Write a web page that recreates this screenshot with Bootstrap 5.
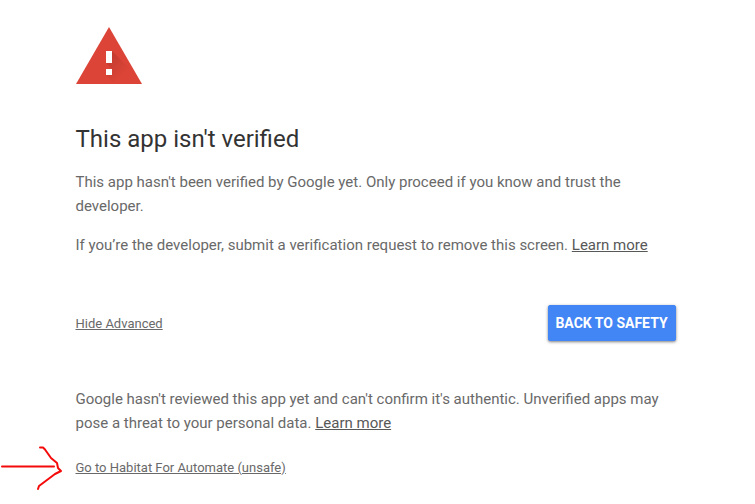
<!DOCTYPE html>
<html lang="en">
<head>
<meta charset="utf-8">
<meta name="viewport" content="width=device-width, initial-scale=1">
<title>This app isn't verified</title>
<link href="https://cdn.jsdelivr.net/npm/bootstrap@5.3.0/dist/css/bootstrap.min.css" rel="stylesheet">
<style>
  body { font-family: Roboto, "Liberation Sans", sans-serif; font-size: 15px; line-height: 24px; color: #696969; padding-right: 4px; }
  .interstitial { max-width: 600px; padding-top: 27px; }
  .warning-icon { width: 66px; height: 57px; margin-bottom: 40px; }
  .interstitial h1 { font-size: 24px; line-height: 30px; color: #333; margin-bottom: 16px; }
  .interstitial p { margin-bottom: 15px; }
  .interstitial a { color: #696969; text-underline-offset: 1px; }
  .interstitial p a { color: #585858; }
  .actions { margin-top: 48px; margin-bottom: 46px; }
  .fine { font-size: 13px; line-height: 20px; }
  .text-toggle { --bs-btn-font-size: 13px; --bs-btn-line-height: 20px; color: #696969; text-underline-offset: 1px; padding: 2px 0 0; }
  .btn-safety { --bs-btn-color: #fff; --bs-btn-bg: #4285f4; --bs-btn-border-color: #4285f4; --bs-btn-hover-color: #fff; --bs-btn-hover-bg: #3477e8; --bs-btn-hover-border-color: #3477e8; --bs-btn-font-size: 14px; --bs-btn-font-weight: 700; --bs-btn-line-height: 20px; --bs-btn-padding-x: 6px; --bs-btn-padding-y: 7px; --bs-btn-border-radius: 2px; min-width: 128px; box-shadow: 0 1px 3px rgba(0,0,0,.5); }
  .proceed { padding: 8px 0 24px; }
  .pointer-arrow { left: -76px; top: -5px; width: 64px; height: 46px; }
</style>
<script src="https://cdn.jsdelivr.net/npm/bootstrap@5.3.0/dist/js/bootstrap.bundle.min.js" defer></script>
</head>
<body class="bg-white">
<main class="interstitial mx-auto">
  <svg class="warning-icon d-block" viewBox="0 0 66 57" aria-hidden="true">
    <defs>
      <linearGradient id="shade" x1="32" y1="26" x2="50" y2="44" gradientUnits="userSpaceOnUse">
        <stop offset="0" stop-color="#a52f26" stop-opacity=".5"/>
        <stop offset="1" stop-color="#a52f26" stop-opacity="0"/>
      </linearGradient>
    </defs>
    <path d="M33 0 66 57H0Z" fill="#db4437"/>
    <path d="M36 24 54 42 66 57H39L30 48 36 42 30 36Z" fill="url(#shade)"/>
    <path d="M30 24h6v12h-6zM30 42h6v6h-6z" fill="#fff"/>
  </svg>
  <h1 class="fw-normal">This app isn't verified</h1>
  <p>This app hasn't been verified by Google yet. Only proceed if you know and trust the developer.</p>
  <p>If you’re the developer, submit a verification request to remove this screen. <a href="#learn">Learn more</a></p>
  <div class="actions d-flex justify-content-between align-items-center">
    <button type="button" class="text-toggle btn btn-link border-0" aria-expanded="true" aria-controls="details">Hide Advanced</button>
    <button type="button" class="btn btn-safety">BACK TO SAFETY</button>
  </div>
  <section id="details">
    <p>Google hasn't reviewed this app yet and can't confirm it's authentic. Unverified apps may pose a threat to your personal data. <a href="#data">Learn more</a></p>
    <div class="proceed position-relative">
      <svg class="pointer-arrow position-absolute" viewBox="0 0 64 46" fill="none" stroke="#f40a0a" stroke-width="2" stroke-linecap="round" stroke-linejoin="round" aria-hidden="true">
        <path d="M2 21.500H54M40 2.500H43L45 4.500 51 13 57 18 58 23 61 26 55 29 39 41 38 44"/>
      </svg>
      <a class="fine d-block" href="#proceed">Go to Habitat For Automate (unsafe)</a>
    </div>
  </section>
</main>
</body>
</html>
